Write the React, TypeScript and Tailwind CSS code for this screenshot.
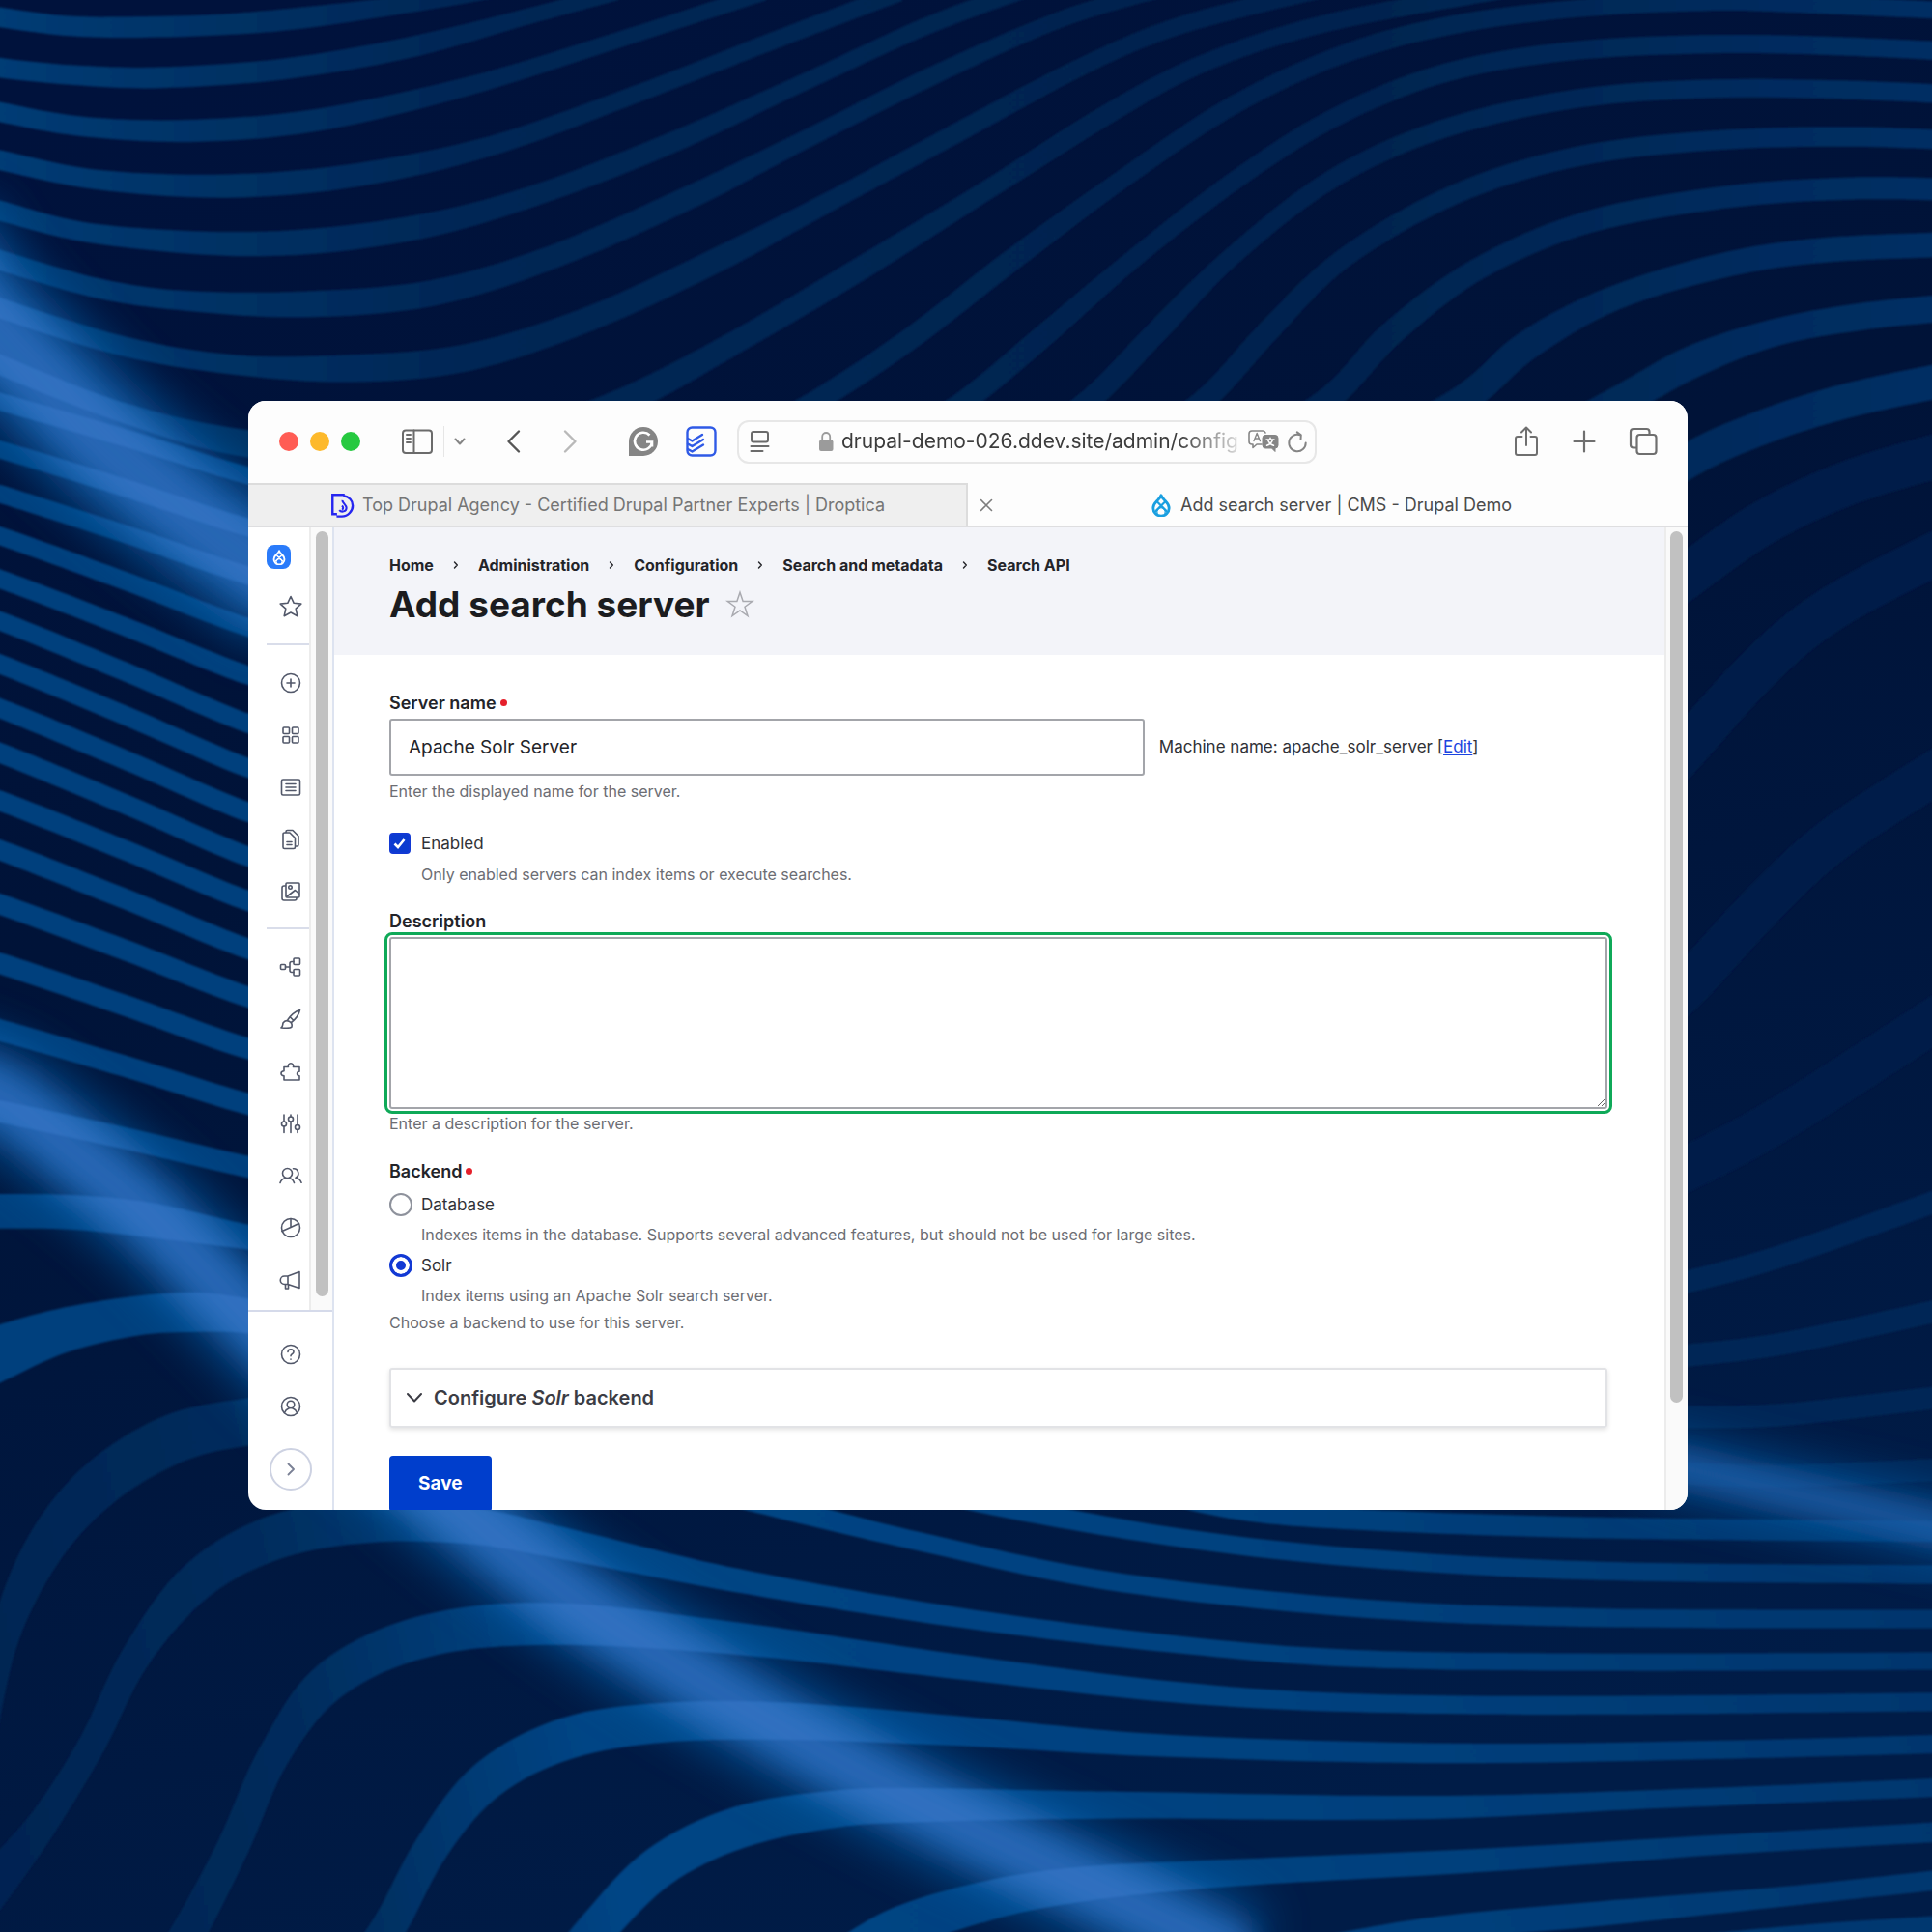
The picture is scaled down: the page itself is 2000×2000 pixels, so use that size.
import React from "react";

/* x, y and the ribbon's thickness at that point */
type Pt = [number, number, number?];

function segments(p: Pt[]): string {
  let d = "";
  for (let i = 0; i < p.length - 1; i++) {
    const a = p[i - 1] ?? p[i];
    const b = p[i];
    const c = p[i + 1];
    const e = p[i + 2] ?? c;
    d += `C${b[0] + (c[0] - a[0]) / 6} ${b[1] + (c[1] - a[1]) / 6} ${c[0] - (e[0] - b[0]) / 6} ${c[1] - (e[1] - b[1]) / 6} ${c[0]} ${c[1]}`;
  }
  return d;
}

/* Smooth open curve through a list of points. */
function curve(p: Pt[]): string {
  return `M${p[0][0]} ${p[0][1]}${segments(p)}`;
}

/* Closed ribbon that follows a list of points; a missing thickness repeats the last one given. */
function ribbon(p: Pt[], start: number): string {
  let w = start;
  const up: Pt[] = [];
  const down: Pt[] = [];
  p.forEach((q, i) => {
    w = q[2] ?? w;
    const a = p[i - 1] ?? q;
    const b = p[i + 1] ?? q;
    const dx = b[0] - a[0];
    const dy = b[1] - a[1];
    const len = Math.hypot(dx, dy) || 1;
    const nx = (-dy / len) * (w / 2);
    const ny = (dx / len) * (w / 2);
    up.push([q[0] - nx, q[1] - ny]);
    down.push([q[0] + nx, q[1] + ny]);
  });
  down.reverse();
  return `${curve(up)}L${down[0][0]} ${down[0][1]}${segments(down)}Z`;
}

const topWaves: Pt[][] = [
  [[-20, 10], [0, 14], [55, 21], [110, 22, 17], [180, 20], [250, 14], [355, 0, 13], [400, -8]],
  [[-20, 50], [0, 55], [60, 61], [130, 63, 17], [230, 56], [330, 39], [430, 13, 13], [500, -6]],
  [[-20, 85], [0, 91], [70, 103], [160, 106, 18], [260, 97], [380, 70, 15], [500, 33, 13], [620, -6]],
  [[-20, 124], [0, 130], [80, 146], [185, 151, 19], [290, 142], [400, 118, 16], [520, 75, 14], [620, 36], [730, -6]],
  [[-20, 164], [0, 171], [80, 190], [210, 198, 20], [330, 186], [430, 160, 17], [540, 118], [650, 68, 14], [750, 22], [830, -8]],
  [[-20, 203], [0, 211], [80, 234], [150, 244], [245, 247, 21], [350, 238], [450, 208, 19], [560, 160], [660, 110, 15], [760, 60], [860, 16, 13], [940, -8]],
  [[-20, 240], [0, 250], [100, 281], [190, 296], [285, 299, 22], [380, 290], [480, 258, 20], [580, 212], [680, 160, 16], [780, 106], [880, 53, 14], [960, 20], [1070, -8]],
  [[-20, 285], [0, 296], [100, 335], [200, 360, 22], [330, 370], [430, 352], [510, 324], [600, 276, 19], [700, 217], [800, 155, 16], [900, 92], [980, 50, 14], [1080, 18], [1220, -8]],
  [[600, 360, 18], [665, 324], [740, 274], [820, 212], [910, 146, 15], [1000, 86], [1090, 44], [1180, 20], [1280, 7, 14], [1380, 2], [1450, 3], [1590, 9]],
  [[720, 365, 18], [785, 324], [850, 270], [920, 210, 15], [1000, 148], [1080, 97], [1170, 60], [1270, 42], [1380, 36], [1480, 37], [1590, 42]],
  [[820, 370, 18], [885, 324], [940, 268], [1000, 208, 15], [1080, 146], [1170, 105], [1280, 80], [1390, 72], [1500, 73], [1590, 77]],
  [[910, 372, 18], [978, 324], [1030, 268], [1090, 210, 16], [1180, 158], [1280, 127], [1390, 114, 16], [1500, 111], [1590, 114]],
  [[1000, 372, 20], [1078, 324], [1130, 270], [1200, 218, 18], [1290, 180], [1400, 160], [1500, 153], [1590, 154]],
  [[1100, 372, 24], [1188, 324], [1240, 280], [1310, 242, 20], [1400, 215], [1480, 203], [1590, 198]],
  [[1230, 372, 26], [1318, 324], [1375, 293], [1440, 270, 22], [1510, 257], [1590, 249]],
  [[1300, 420, 28], [1370, 374], [1430, 347], [1500, 325], [1590, 306]],
];

const sideYs: [number, number][] = [
  [326, 386], [365, 428], [401, 467], [435, 509], [470, 548], [504, 587], [539, 623],
  [575, 659], [611, 695], [650, 731], [690, 770], [734, 809], [782, 851], [836, 896], [902, 947],
];

const leftWaves: Pt[][] = [
  ...sideYs.map(([l, r], i): Pt[] => [[-20, l - 4, 14 + i / 4], [0, l], [100, (l + r) / 2 - 1], [201, r], [240, r + 6]]),
  [[-20, 983, 28], [0, 983], [60, 984], [120, 990], [201, 1004, 20], [240, 1010]],
  [[-20, 1108, 44], [0, 1098], [50, 1080, 36], [110, 1068, 32], [160, 1065], [201, 1068, 28], [240, 1075]],
];

const rightWaves: Pt[][] = [
  [[1340, 490], [1370, 467], [1430, 425], [1500, 392], [1590, 365]],
  [[1340, 640], [1370, 606], [1430, 540], [1490, 492], [1590, 440]],
  [[1340, 826], [1370, 800], [1430, 735], [1490, 680], [1590, 615]],
  [[1340, 960], [1370, 948], [1450, 905], [1590, 815]],
];

const rightLowWaves: Pt[][] = [
  [[1340, 1045], [1370, 1040], [1450, 1018], [1590, 968]],
  [[1340, 1103], [1370, 1100], [1450, 1090], [1590, 1060]],
  [[1340, 1150], [1370, 1150], [1450, 1148], [1590, 1132]],
  [[1340, 1195], [1370, 1196], [1450, 1198], [1590, 1192]],
];

const bottomWaves: Pt[][] = [
  [[-15, 1415, 22], [3, 1330, 24], [35, 1258, 32], [80, 1205, 38], [140, 1168, 40], [201, 1154, 38], [260, 1150]],
  [[-15, 1545, 30], [5, 1518], [38, 1475, 24], [75, 1415, 22], [110, 1345, 24], [160, 1283, 32], [225, 1247, 36], [300, 1235, 34], [380, 1238, 30], [450, 1251, 26], [600, 1283, 19], [780, 1313, 16], [950, 1334, 14], [1100, 1346], [1300, 1349], [1590, 1348]],
  [[125, 1610, 28], [155, 1565], [190, 1497, 26], [222, 1425, 26], [268, 1364, 32], [345, 1328, 34], [450, 1318, 34], [600, 1330, 26], [780, 1353, 20], [950, 1373, 17], [1100, 1382, 15], [1300, 1384], [1590, 1381]],
  [[280, 1610, 28], [315, 1565], [350, 1500, 28], [395, 1445, 32], [460, 1411, 34], [540, 1398, 32], [640, 1397, 30], [780, 1405, 24], [950, 1417, 18], [1180, 1423, 16], [1400, 1420, 15], [1590, 1415]],
  [[450, 1610, 32], [485, 1565], [535, 1515, 34], [600, 1483, 34], [680, 1468, 30], [760, 1465, 27], [900, 1465, 22], [1150, 1467, 19], [1350, 1460, 15], [1590, 1450]],
  [[660, 1610, 36], [725, 1568], [800, 1543, 32], [880, 1529, 28], [1000, 1520, 22], [1200, 1510, 19], [1400, 1497, 16], [1590, 1486]],
  [[1080, 1580, 20], [1170, 1565], [1300, 1553], [1450, 1539, 16], [1590, 1524]],
  [[1370, 1580, 18], [1480, 1570], [1590, 1563]],
  [[560, 1205, 17], [650, 1228], [750, 1252, 15], [900, 1283], [1100, 1305], [1300, 1313], [1590, 1314]],
  [[740, 1205, 17], [815, 1223], [950, 1247, 15], [1100, 1264], [1300, 1275], [1590, 1278]],
  [[920, 1205, 17], [1000, 1224], [1100, 1233], [1300, 1240], [1590, 1243]],
];

const beamTop: Pt[] = [[-60, 190], [-20, 250], [38, 312], [92, 366], [162, 424], [244, 484]];
const beamRight: Pt[] = [[1330, 1182], [1420, 1204], [1500, 1222], [1620, 1250]];
const beamBottom: Pt[] = [[-60, 870], [0, 890], [60, 935], [120, 985], [190, 1056], [270, 1135], [370, 1222], [425, 1267], [495, 1318], [615, 1392], [745, 1463], [885, 1530], [1010, 1590]];

function Ribbons({ waves, w }: { waves: Pt[][]; w: number }) {
  return <>{waves.map((p, i) => <path key={i} d={ribbon(p, w)} />)}</>;
}

function Backdrop() {
  return (
    <svg aria-hidden="true" className="absolute inset-0 h-full w-full" viewBox="0 0 1568 1568" preserveAspectRatio="xMidYMid slice" fill="none">
      <defs>
        <linearGradient id="base" gradientUnits="userSpaceOnUse" x1="300" y1="0" x2="800" y2="1568">
          <stop offset="0" stopColor="#00123c" />
          <stop offset="0.4" stopColor="#001338" />
          <stop offset="1" stopColor="#001c47" />
        </linearGradient>
        <linearGradient id="waveTop" gradientUnits="userSpaceOnUse" x1="0" y1="0" x2="1568" y2="0">
          <stop offset="0" stopColor="#033c75" />
          <stop offset="0.13" stopColor="#013062" />
          <stop offset="0.25" stopColor="#002654" />
          <stop offset="0.7" stopColor="#00244f" />
          <stop offset="1" stopColor="#002f64" />
        </linearGradient>
        <linearGradient id="waveBottom" gradientUnits="userSpaceOnUse" x1="0" y1="1500" x2="1568" y2="1150">
          <stop offset="0" stopColor="#002452" />
          <stop offset="0.16" stopColor="#012c5c" />
          <stop offset="0.3" stopColor="#044585" />
          <stop offset="0.65" stopColor="#04427f" />
          <stop offset="1" stopColor="#03356c" />
        </linearGradient>
        <filter id="glowWide" x="-30%" y="-30%" width="160%" height="160%"><feGaussianBlur stdDeviation="20" /></filter>
        <filter id="glow" x="-30%" y="-30%" width="160%" height="160%"><feGaussianBlur stdDeviation="11" /></filter>
        <filter id="soft"><feGaussianBlur stdDeviation="0.8" /></filter>
        <mask id="beamMask" maskUnits="userSpaceOnUse" x="0" y="0" width="1568" height="1568">
          <g stroke="#fff" filter="url(#glow)">
            <path d={curve(beamTop)} strokeWidth="80" />
            <path d={curve(beamBottom)} strokeWidth="70" />
          </g>
        </mask>
      </defs>
      <rect width="1568" height="1568" fill="url(#base)" />
      <g filter="url(#soft)">
        <g fill="url(#waveTop)"><Ribbons waves={topWaves} w={16} /></g>
        <g fill="#02407d"><Ribbons waves={leftWaves} w={16} /></g>
        <g fill="#001f49"><Ribbons waves={rightWaves} w={36} /></g>
        <g fill="#002756"><Ribbons waves={rightLowWaves} w={18} /></g>
        <g fill="url(#waveBottom)"><Ribbons waves={bottomWaves} w={20} /></g>
      </g>
      <g stroke="#0860ac" filter="url(#glowWide)" opacity="0.8">
        <path d={curve(beamTop)} strokeWidth="104" />
        <path d={curve(beamBottom)} strokeWidth="78" />
        <path d={curve(beamRight)} strokeWidth="40" />
      </g>
      <g stroke="#2c69b8" filter="url(#glow)" opacity="0.9">
        <path d={curve(beamTop)} strokeWidth="52" />
        <path d={curve(beamBottom)} strokeWidth="40" />
        <path d={curve(beamRight)} strokeWidth="12" />
      </g>
      <g mask="url(#beamMask)" opacity="0.25">
        <g filter="url(#soft)" fill="#4f8ce0">
          <Ribbons waves={topWaves.slice(5, 8)} w={16} />
          <Ribbons waves={leftWaves} w={16} />
          <Ribbons waves={bottomWaves.slice(0, 6)} w={20} />
        </g>
      </g>
    </svg>
  );
}

type IconProps = { children: React.ReactNode; className?: string; box?: string; sw?: number };

function Icon({ children, className = "size-6", box = "0 0 24 24", sw = 1.5 }: IconProps) {
  return (
    <svg aria-hidden="true" className={className} viewBox={box} fill="none" stroke="currentColor" strokeWidth={sw} strokeLinecap="round" strokeLinejoin="round">
      {children}
    </svg>
  );
}

function DropIcon({ className }: { className: string }) {
  return (
    <svg aria-hidden="true" className={className} viewBox="0 0 24 24" fill="none" stroke="currentColor" strokeLinejoin="round" strokeLinecap="round">
      <path d="M12 1.800c.9 2.800 2.800 4.200 4.700 6.100 2 2 3.500 4 3.500 7a8.200 8.200 0 0 1-16.400 0c0-3 1.500-5 3.500-7C9.200 6 11.100 4.600 12 1.800z" strokeWidth="2.800" />
      <path d="M8 8.500 17.500 18M16 8.500 6.500 18" strokeWidth="2.200" />
      <path d="M8 20.500a4.300 4.300 0 1 1 8 0" strokeWidth="1.400" />
    </svg>
  );
}

function Toolbar() {
  const btn = "flex shrink-0 items-center justify-center";
  return (
    <div className="flex h-[85px] shrink-0 items-center pr-[29px] pb-px pl-8">
      <div className="flex gap-3">
        <button aria-label="Close window" className="size-5 rounded-full bg-[#ff5c54]" />
        <button aria-label="Minimise window" className="size-5 rounded-full bg-[#fdb92b]" />
        <button aria-label="Zoom window" className="size-5 rounded-full bg-[#26c940]" />
      </div>
      <button aria-label="Sidebar" className={`${btn} ml-[42px] text-[#6b6b6b]`}>
        <Icon className="h-7 w-[34px]" box="0 0 34 28" sw={2}>
          <rect x="2" y="2.500" width="30" height="23.500" rx="3" />
          <path d="M13.500 2.500V26M6 7h4M6 11h4M6 15h4" />
        </Icon>
      </button>
      <span className="ml-2.5 h-8 w-px bg-[#e6e6e6]" />
      <button aria-label="Tab groups" className={`${btn} ml-2 text-[#858585]`}>
        <Icon className="size-4" box="0 0 16 16" sw={2}><path d="m3.500 5.500 4.500 5 4.500-5" /></Icon>
      </button>
      <button aria-label="Back" className={`${btn} ml-[34px] text-[#565656]`}>
        <Icon className="size-7" box="0 0 28 28" sw={2.4}><path d="M19 3.500 8.500 14 19 24.500" /></Icon>
      </button>
      <button aria-label="Forward" className={`${btn} ml-[30px] text-[#b9b9b9]`}>
        <Icon className="size-7" box="0 0 28 28" sw={2.4}><path d="M9 3.500 19.500 14 9 24.500" /></Icon>
      </button>
      <button aria-label="Grammarly" className={`${btn} ml-[46px] text-[#858585]`}>
        <svg aria-hidden="true" className="size-8" viewBox="0 0 32 32">
          <path d="M16 1A15 15 0 1 1 16 31H1V16A15 15 0 0 1 16 1z" fill="currentColor" />
          <path d="M22.500 9.500A9 9 0 1 0 25 16.500h-6M25 16.500v5" fill="none" stroke="#fff" strokeWidth="2.600" />
        </svg>
      </button>
      <button aria-label="Todoist" className={`${btn} ml-7 text-[#2f5ae6]`}>
        <Icon className="size-8" box="0 0 32 32" sw={2.4}>
          <rect x="1.500" y="1.500" width="29" height="29" rx="5" />
          <path d="m2 13 4.500 2.500L17 9M2 18.500l4.500 2.500L18 14M2 24l4.500 2.500L18 19.500" />
        </Icon>
      </button>
      <div className="ml-[21px] flex h-[45px] w-[600px] shrink-0 items-center rounded-xl border-2 border-[#e7e7e7] pr-1.5 pl-2.5">
        <button aria-label="Reader" className={`${btn} text-[#6b6b6b]`}>
          <Icon className="size-6" box="0 0 24 24" sw={2}>
            <rect x="3" y="2" width="17" height="10.500" rx="2" />
            <path d="M2.500 17h18M2.500 22h12" />
          </Icon>
        </button>
        <svg aria-hidden="true" className="ml-[46px] h-6 w-5 shrink-0 text-[#9b9b9b]" viewBox="0 0 20 24">
          <rect x="3" y="10.500" width="14.500" height="11.500" rx="2" fill="currentColor" />
          <path d="M6.200 11V7a4 4 0 0 1 8 0v4" fill="none" stroke="currentColor" strokeWidth="1.800" />
        </svg>
        <input
          aria-label="Address"
          readOnly
          value="drupal-demo-026.ddev.site/admin/config"
          className="ml-1.5 min-w-0 flex-1 bg-transparent [mask-image:linear-gradient(to_right,black_84%,transparent_102%)] text-[21px] text-[#3c3c3c] outline-none"
        />
        <button aria-label="Translate" className={`${btn} ml-1.5 text-[#868686]`}>
          <svg aria-hidden="true" className="h-6 w-8" viewBox="0 0 32 24" fill="none" stroke="currentColor" strokeLinecap="round" strokeLinejoin="round">
            <path d="M14 15H9l-4 3.500V15H4a3 3 0 0 1-3-3V4a3 3 0 0 1 3-3h11a3 3 0 0 1 3 2" strokeWidth="1.600" />
            <path d="m6 11.500 3.200-8 3.200 8M7.200 9h4" strokeWidth="1.400" />
            <path d="M18 5.500h10a3 3 0 0 1 3 3V16a3 3 0 0 1-3 3v3.500L24.500 19H18a3 3 0 0 1-3-3V8.500a3 3 0 0 1 3-3z" fill="currentColor" strokeWidth="1" />
            <path d="M19 10h8M23 8.200V10M25.500 10c-.5 2.500-2.500 5-6 6.300M20.500 10c.5 2.500 2.500 5 6 6.300" stroke="#fff" strokeWidth="1.500" />
          </svg>
        </button>
        <button aria-label="Reload" className={`${btn} ml-[7px] text-[#858585]`}>
          <Icon className="size-6" sw={2}>
            <path d="M15 5.400A8.700 8.700 0 1 0 20.700 13.500M15.500 9.800 15.800 5.300 11.800 2.400" />
          </Icon>
        </button>
      </div>
      <div className="ml-auto flex items-center gap-8 text-[#6f6f6f]">
        <button aria-label="Share" className={btn}>
          <Icon className="h-8 w-7" box="0 0 28 32" sw={2}>
            <path d="M9.500 11H5a2 2 0 0 0-2 2v15a2 2 0 0 0 2 2h18a2 2 0 0 0 2-2V13a2 2 0 0 0-2-2h-4.500M14 20V2M9 6.500 14 1.500l5 5" />
          </Icon>
        </button>
        <button aria-label="New tab" className={btn}>
          <Icon className="size-7" box="0 0 28 28" sw={2.2}><path d="M14 3.500v21M3.500 14h21" /></Icon>
        </button>
        <button aria-label="Tab overview" className={btn}>
          <Icon className="size-8" box="0 0 32 32" sw={2.2}>
            <rect x="8.500" y="9" width="20" height="20" rx="3" />
            <path d="M8 22.500H5a3 3 0 0 1-3-3V6a3 3 0 0 1 3-3h13.500a3 3 0 0 1 3 3v2.500" />
          </Icon>
        </button>
      </div>
    </div>
  );
}

function Tabs() {
  return (
    <div role="tablist" className="grid h-[46px] shrink-0 grid-cols-2 border-b-2 border-[#dedee0] text-lg">
      <button role="tab" aria-selected="false" className="flex items-center justify-center gap-2 border-t-2 border-r-2 border-[#dcdcdc] bg-[#efefef] text-[#757575]">
        <svg aria-hidden="true" className="size-[26px] text-[#2626f0]" viewBox="0 0 28 28" fill="none" stroke="currentColor" strokeWidth="2.600">
          <path d="M8.500 24H3.500V2.500H17M15.500 3.500C22 4.500 26 9 26 14.500S21 26.500 14 26.500H8" />
          <path d="M14.500 8.500c-.5 2.500 4.500 5 4.500 8.500 0 4-5.500 5.500-8 2.500M14 14.500c1.500 1.500 1.800 3 .2 4.500" strokeWidth="2.200" />
        </svg>
        Top Drupal Agency - Certified Drupal Partner Experts | Droptica
      </button>
      <div className="flex items-center px-2.5 pt-0.5 text-[#4a4a4a]">
        <button aria-label="Close tab" className="text-[#7d7d7d]">
          <Icon className="size-[18px]" box="0 0 18 18" sw={1.6}><path d="m3.500 3.500 11 11M14.500 3.500l-11 11" /></Icon>
        </button>
        <button role="tab" aria-selected="true" className="flex flex-1 items-center justify-center gap-2 pr-3">
          <DropIcon className="size-6 text-[#1a9fe0]" />
          Add search server | CMS - Drupal Demo
        </button>
      </div>
    </div>
  );
}

const contentIcons: { label: string; art: React.ReactNode }[] = [
  { label: "Create", art: <><circle cx="12" cy="12" r="9.500" /><path d="M12 8v8M8 12h8" /></> },
  { label: "Blocks", art: <><rect x="4" y="4" width="6.500" height="6.500" rx="1" /><rect x="13.500" y="4" width="6.500" height="6.500" rx="1" /><rect x="4" y="13.500" width="6.500" height="6.500" rx="1" /><rect x="13.500" y="13.500" width="6.500" height="6.500" rx="1" /></> },
  { label: "Content", art: <><rect x="2.500" y="4" width="19" height="16" rx="1.500" /><path d="M7 8.500h10M7 12h10M7 15.500h10" /></> },
  { label: "Files", art: <><path d="M7 4.500V4a1.500 1.500 0 0 1 1.500-1.500H14l6 6v9a1.500 1.500 0 0 1-1.500 1.500H17.500" /><path d="M5.500 5H11l5.500 5.500v9.500a1.500 1.500 0 0 1-1.500 1.500H5.500A1.500 1.500 0 0 1 4 20V6.500A1.500 1.500 0 0 1 5.500 5zM8 14.500h5M8 17.500h5" /></> },
  { label: "Media", art: <><path d="M8 3h12a1 1 0 0 1 1 1v13a1 1 0 0 1-1 1H8a1 1 0 0 1-1-1V4a1 1 0 0 1 1-1zM7 6H5a2 2 0 0 0-2 2v11a2 2 0 0 0 2 2h11a2 2 0 0 0 2-2v-1" /><circle cx="11.500" cy="7.500" r="1.700" /><path d="m8 17 8.500-6.500 4 3.500" /></> },
];

const adminIcons: { label: string; art: React.ReactNode }[] = [
  { label: "Structure", art: <><rect x="1.500" y="9.500" width="5" height="5" rx="1" /><rect x="15" y="3" width="6.500" height="6.500" rx="1" /><rect x="15" y="14.500" width="6.500" height="6.500" rx="1" /><path d="M6.500 12h4.500M15 6.500h-2a2 2 0 0 0-2 2v7a2 2 0 0 0 2 2h2" /></> },
  { label: "Appearance", art: <><path d="M2 21c2-1.500 1.500-3 2-5a5 5 0 0 1 9 4c-1.500 2-6 1.500-11 1zM9 12.500C12 8 17 4 21.500 2.500 20.500 7 17 12 12.500 15.500M11.500 10l3.500 3.500" /></> },
  { label: "Extend", art: <><path d="M5 7.500h4.500a2.700 2.700 0 1 1 5 0H21v4.700c-3 0-3.500 4.300 0 4.600V21H5v-4.200c-4-.5-4-4.800 0-5z" /></> },
  { label: "Configuration", art: <><path d="M5 3v7M5 15v6.500M12 3v2M12 10v11.500M19 3v10.500M19 18.500v3" /><circle cx="5" cy="12.500" r="2.500" /><circle cx="12" cy="7.500" r="2.500" /><circle cx="19" cy="16" r="2.500" /></> },
  { label: "People", art: <><circle cx="8.500" cy="9.500" r="5" /><path d="M1 19.500c1-3 3-4.500 5.500-5M10.500 14.500c2.500.5 4 2 5 5M14.500 4.800a5 5 0 0 1 2.500 9.500c3 .5 5 2 6 5" /></> },
  { label: "Reports", art: <><circle cx="12" cy="12" r="9.500" /><path d="M12 2.500V11.500L3 15.500M12 11.500 20.500 7.500" /></> },
  { label: "Announcements", art: <><path d="M21 3.500v17L9 16.500H5.500a4 4 0 0 1 0-8.500H9zM9 8v8.500M6.500 16.500V21h3v-4" /></> },
];

function NavRow({ label, children }: { label: string; children: React.ReactNode }) {
  return (
    <a href="#" aria-label={label} className="flex h-[54px] items-center pl-8 text-[#52586a]">
      <Icon sw={1.6}>{children}</Icon>
    </a>
  );
}

function Sidebar() {
  return (
    <nav aria-label="Administration" className="flex w-[89px] shrink-0 flex-col border-r-2 border-[#dde3f0]">
      <div className="flex min-h-0 flex-1 border-b-2 border-[#d5daea]">
        <div className="flex-1 overflow-hidden">
          <a href="#" aria-label="Drupal" className="mt-[18px] mb-3 ml-[19px] flex size-[25px] items-center justify-center rounded-lg bg-[#2a7bfa] text-white">
            <DropIcon className="size-4" />
          </a>
          <NavRow label="Shortcuts">
            <path d="m12 1.500 3.200 6.800 7.600.8-5.600 5 1.600 7.600L12 18l-6.800 3.700 1.600-7.600-5.600-5 7.600-.8z" />
          </NavRow>
          <hr className="mt-[11px] mb-3 ml-[19px] border-t-2 border-[#d9ddea]" />
          {contentIcons.map((i) => <NavRow key={i.label} label={i.label}>{i.art}</NavRow>)}
          <hr className="mt-2.5 mb-3 ml-[19px] border-t-2 border-[#d9ddea]" />
          {adminIcons.map((i) => <NavRow key={i.label} label={i.label}>{i.art}</NavRow>)}
        </div>
        <div className="w-6 shrink-0 border-l-2 border-[#ececec] bg-[#fafafa] pt-1 pb-3.5 pl-[5px]">
          <div className="h-full w-[13px] rounded-full bg-[#c1c1c1]" />
        </div>
      </div>
      <div className="flex h-[205px] shrink-0 flex-col pt-[17px]">
        <NavRow label="Help">
          <circle cx="12" cy="12" r="9.500" />
          <path d="M9 9.500c.2-1.800 1.500-2.700 3-2.700s3 1 3 2.700c0 2-3 2.200-3 4.200M12 17v.2" />
        </NavRow>
        <NavRow label="Account">
          <circle cx="12" cy="12" r="9.500" />
          <circle cx="12" cy="10" r="3.800" />
          <path d="M5.500 18.500c1-2.500 2.500-3.800 4.500-4.500M18.500 18.500c-1-2.500-2.500-3.800-4.500-4.500" />
        </NavRow>
        <button aria-label="Expand sidebar" className="mt-4 ml-[22px] flex size-11 items-center justify-center rounded-full border-2 border-[#cdd2e2] text-[#7a8095]">
          <Icon className="size-4" box="0 0 16 16" sw={1.8}><path d="m5.500 2.500 5.500 5.500-5.500 5.500" /></Icon>
        </button>
      </div>
    </nav>
  );
}

const crumbs = ["Home", "Administration", "Configuration", "Search and metadata", "Search API"];

function PageHeader() {
  return (
    <header className="bg-[#f3f4f9] px-[57px] pt-[29px] pb-[30px]">
      <nav aria-label="Breadcrumb">
        <ol className="flex h-5 items-center text-base leading-5 font-bold text-[#232429]">
          {crumbs.map((c, i) => (
            <li key={c} className="flex items-center whitespace-nowrap">
              {i > 0 && (
                <Icon className="mx-[18px] size-2.5" box="0 0 10 10" sw={1.4}><path d="m3.500 2 2.800 3-2.800 3" /></Icon>
              )}
              <a href="#">{c}</a>
            </li>
          ))}
        </ol>
      </nav>
      <div className="mt-[9px] flex items-center gap-4">
        <h1 className="text-[37px] leading-[44px] font-bold text-[#1b1c20]">Add search server</h1>
        <button aria-label="Add to shortcuts" className="text-[#a9aab0]">
          <Icon className="size-[30px]" sw={1.2}>
            <path d="m12 1.800 2.500 7.400h7.700l-6.200 4.600 2.400 7.500L12 16.700l-6.400 4.600L8 13.800 1.800 9.200h7.700z" strokeLinejoin="miter" />
          </Icon>
        </button>
      </div>
    </header>
  );
}

function Required() {
  return <span aria-hidden="true" className="mb-1 ml-1 inline-block size-[7px] rounded-full bg-[#e5202b] align-middle" />;
}

const LABEL = "text-lg leading-6 font-semibold text-[#232429]";
const HELP = "text-base leading-5 text-[#6c6d73]";
const OPTION = "text-[17px] leading-6 text-[#303136]";

function RadioOption({ id, label, help, checked }: { id: string; label: string; help: string; checked?: boolean }) {
  return (
    <div>
      <div className="flex items-center gap-[9px]">
        <input
          type="radio"
          id={id}
          name="backend"
          defaultChecked={checked}
          className="size-6 shrink-0 appearance-none rounded-full border-2 border-[#8e929c] bg-white checked:border-3 checked:border-[#1239d4] checked:bg-[#1239d4] checked:shadow-[inset_0_0_0_4px_white]"
        />
        <label htmlFor={id} className={OPTION}>{label}</label>
      </div>
      <p className={`mt-[9px] ml-[33px] ${HELP}`}>{help}</p>
    </div>
  );
}

function ServerForm() {
  return (
    <form className="pt-[38px] pr-[59px] pl-[57px]" onSubmit={(e) => e.preventDefault()}>
      <label htmlFor="name" className={`block ${LABEL}`}>Server name<Required /></label>
      <div className="mt-1 flex items-center gap-[15px]">
        <input
          id="name"
          type="text"
          defaultValue="Apache Solr Server"
          className="h-[59px] w-[62%] rounded-[3px] border-2 border-[#a3a5aa] px-[18px] text-[19px] text-[#232429] outline-none"
        />
        <p className="text-[17px] whitespace-nowrap text-[#303136]">
          Machine name: apache_solr_server [<a href="#" className="text-[#1a44e0] underline underline-offset-2">Edit</a>]
        </p>
      </div>
      <p className={`mt-1.5 ${HELP}`}>Enter the displayed name for the server.</p>

      <div className="mt-8 flex items-center gap-[11px]">
        <span className="relative size-[22px]">
          <input
            id="enabled"
            type="checkbox"
            defaultChecked
            className="block size-[22px] appearance-none rounded-sm border-2 border-[#8e929c] checked:border-[#1239d4] checked:bg-[#0b3bd0]"
          />
          <svg aria-hidden="true" className="pointer-events-none absolute inset-0 size-full" viewBox="0 0 22 22" fill="none" stroke="#fff" strokeWidth="2.600">
            <path d="m5.500 11.500 3.500 3.500 6.500-8" />
          </svg>
        </span>
        <label htmlFor="enabled" className={OPTION}>Enabled</label>
      </div>
      <p className={`mt-2.5 ml-[33px] ${HELP}`}>Only enabled servers can index items or execute searches.</p>

      <label htmlFor="description" className={`mt-[27px] block ${LABEL}`}>Description</label>
      <textarea
        id="description"
        className="mt-1 block h-[178px] w-full rounded-[3px] border-2 border-[#a3a5aa] outline-3 outline-offset-2 outline-[#0fa958]"
      />
      <p className={`mt-[5px] ${HELP}`}>Enter a description for the server.</p>

      <fieldset className="mt-7">
        <legend className={LABEL}>Backend<Required /></legend>
        <div className="mt-2.5 flex flex-col gap-2.5">
          <RadioOption id="database" label="Database" help="Indexes items in the database. Supports several advanced features, but should not be used for large sites." />
          <RadioOption id="solr" label="Solr" help="Index items using an Apache Solr search server." checked />
        </div>
        <p className={`mt-2 ${HELP}`}>Choose a backend to use for this server.</p>
      </fieldset>

      <details className="mt-[37px] rounded-[3px] border-2 border-[#e2e3e6] shadow-[0_2px_5px_rgba(0,0,0,0.12)]">
        <summary className="flex h-[58px] cursor-pointer items-center gap-3 px-4 text-xl font-semibold text-[#3b3c44]">
          <Icon className="size-4" box="0 0 16 16" sw={2}><path d="m1 4 7 7.500L15 4" /></Icon>
          <span>Configure <em>Solr</em> backend</span>
        </summary>
      </details>

      <button type="submit" className="mt-[29px] h-[58px] rounded-sm bg-[#003ecc] px-[30px] text-[19px] font-bold text-white">Save</button>
    </form>
  );
}

export default function App() {
  return (
    <div className="relative h-screen overflow-hidden bg-[#00133a] font-[Inter,sans-serif]">
      <Backdrop />
      <div className="relative flex h-full flex-col pt-[415px] pr-[253px] pb-[437px] pl-[257px]">
        <div className="flex min-h-0 flex-1 flex-col overflow-hidden rounded-[18px] bg-white">
          <div className="bg-[#fdfdfd]">
            <Toolbar />
            <Tabs />
          </div>
          <div className="flex min-h-0 flex-1">
            <Sidebar />
            <main className="min-w-0 flex-1 overflow-hidden">
              <PageHeader />
              <ServerForm />
            </main>
            <div className="w-6 shrink-0 border-l-2 border-[#ececec] bg-[#fafafa] pt-1 pl-1">
              <div className="h-[89%] w-[13px] rounded-full bg-[#c1c1c1]" />
            </div>
          </div>
        </div>
      </div>
    </div>
  );
}
